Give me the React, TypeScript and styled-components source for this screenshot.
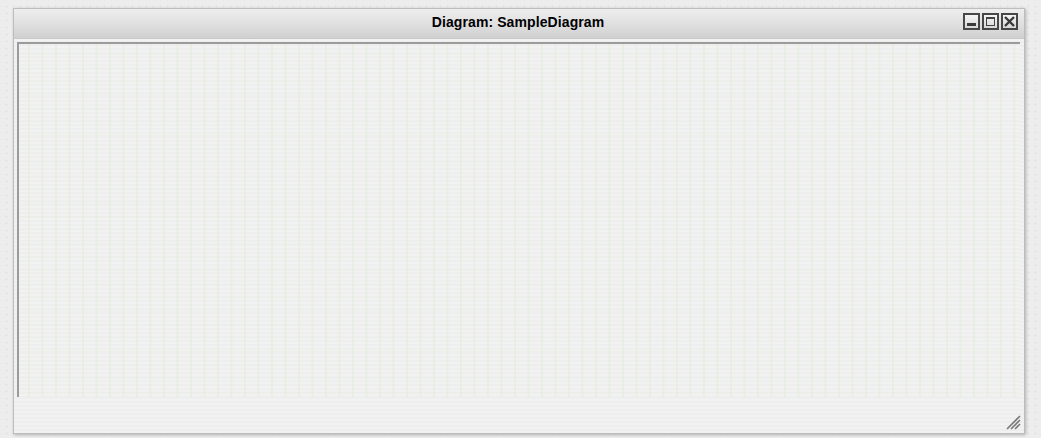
import React from "react";
import styled, { createGlobalStyle } from "styled-components";

const Global = createGlobalStyle`
  html, body { margin: 0; padding: 0; }
  body {
    width: 1041px;
    height: 438px;
    overflow: hidden;
    background-color: #ededed;
    background-image: radial-gradient(circle, #e0e0e0 0.8px, transparent 1.2px);
    background-size: 7px 7px;
    background-position: 3px 3px;
    font-family: "Liberation Sans", Arial, sans-serif;
  }
`;

const Page = styled.div`
  padding: 8px 0 0 13px;
`;

const Window = styled.div`
  width: 1010px;
  height: 424px;
  border: 1px solid #bdbdbd;
  background: repeating-linear-gradient(180deg, #eeeeee 0px, #eeeeee 2px, #f2f2f2 2px, #f2f2f2 4px);
  box-shadow: 1px 1px 3px rgba(0, 0, 0, 0.25);
  display: flex;
  flex-direction: column;
  position: relative;
`;

const TitleBar = styled.div`
  height: 29px;
  border-bottom: 1px solid #c9c9c9;
  background: linear-gradient(180deg, #eeeeee 0%, #e0e0e0 50%, #d0d0d0 100%);
  display: flex;
  align-items: center;
  justify-content: center;
  position: relative;
`;

const Title = styled.span`
  font-size: 14px;
  font-weight: bold;
  color: #000;
  margin-top: -3px;
  margin-left: -2px;
  letter-spacing: 0.1px;
`;

const Controls = styled.div`
  position: absolute;
  right: 6px;
  top: 4px;
  display: flex;
  gap: 2px;
`;

const CtlButton = styled.div`
  width: 17px;
  height: 17px;
  box-sizing: border-box;
  border: 2px solid #474747;
  background: linear-gradient(180deg, #f4f4f4, #d8d8d8);
  position: relative;
  display: flex;
  align-items: center;
  justify-content: center;
`;

const MinBar = styled.div`
  position: absolute;
  left: 2px;
  right: 2px;
  bottom: 2px;
  height: 3px;
  background: #3a3a3a;
`;

const MaxBox = styled.div`
  width: 9px;
  height: 9px;
  box-sizing: border-box;
  border: 1px solid #444;
  border-top-width: 2px;
`;

const Body = styled.div`
  flex: 1;
  padding: 3px 4px 0 3px;
  display: flex;
  flex-direction: column;
`;

const Canvas = styled.div`
  height: 353px;
  border-top: 2px solid #9b9b9b;
  border-left: 2px solid #9b9b9b;
  background-color: #efefef;
  background-image:
    linear-gradient(90deg, rgba(225, 236, 215, 0.55) 2px, transparent 2px),
    linear-gradient(180deg, rgba(225, 236, 215, 0.3) 1px, transparent 1px),
    repeating-linear-gradient(180deg, #eeeeee 0px, #eeeeee 2px, #f2f2f2 2px, #f2f2f2 4px);
  background-size: 13.5px 13.5px, 13.5px 13.5px, auto;
  background-position: 9px 0, 0 10px, 0 0;
`;

const Grip = styled.svg`
  position: absolute;
  right: 3px;
  bottom: 3px;
`;

export default function App() {
  return (
    <>
      <Global />
      <Page>
        <Window>
          <TitleBar>
            <Title>Diagram: SampleDiagram</Title>
            <Controls>
              <CtlButton>
                <MinBar />
              </CtlButton>
              <CtlButton>
                <MaxBox />
              </CtlButton>
              <CtlButton>
                <svg width="11" height="11" viewBox="0 0 11 11">
                  <path d="M1 1 L10 10 M10 1 L1 10" stroke="#3a3a3a" strokeWidth="2.4" />
                </svg>
              </CtlButton>
            </Controls>
          </TitleBar>
          <Body>
            <Canvas />
          </Body>
          <Grip width="16" height="16" viewBox="0 0 16 16">
            <path d="M15 2 L2 15 M15 6 L6 15 M15 10 L10 15" stroke="#7a7a7a" strokeWidth="1.6" />
          </Grip>
        </Window>
      </Page>
    </>
  );
}
